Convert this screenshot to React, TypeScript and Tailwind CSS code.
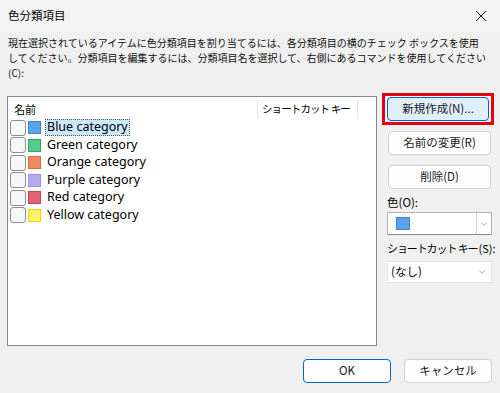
import { ChevronDown } from 'lucide-react';

const jp = { fontFamily: '"Noto Sans CJK JP", "Noto Sans", sans-serif' };
const latin = { fontFamily: '"Noto Sans", "Noto Sans CJK JP", sans-serif' };

const categories = [
    { name: 'Blue category', fill: 'bg-[#5aa3e6]', edge: 'border-[#3a86d0]' },
    { name: 'Green category', fill: 'bg-[#52cc8c]', edge: 'border-[#2fa866]' },
    { name: 'Orange category', fill: 'bg-[#ee8a62]', edge: 'border-[#e06a3e]' },
    { name: 'Purple category', fill: 'bg-[#b3aaee]', edge: 'border-[#9d90e0]' },
    { name: 'Red category', fill: 'bg-[#df6370]', edge: 'border-[#c94453]' },
    { name: 'Yellow category', fill: 'bg-[#fff06a]', edge: 'border-[#f5d800]' },
];

const Button = ({ label, className = '' }: { label: string; className?: string }) => (
    <div
        className={`flex items-center justify-center rounded-[4px] border text-[11.5px] text-[#1a1a1a] ${className}`}
        style={jp}
    >
        {label}
    </div>
);

const App = () => {
    return (
        <div className="flex h-[393px] w-[500px] flex-col overflow-hidden bg-[#f0f0f0] text-black" style={jp}>
            {/* Title bar */}
            <div className="flex h-[32px] shrink-0 items-center justify-between bg-[#f3f3f3] pl-[8px] pr-[12px]">
                <span className="text-[11.5px]">色分類項目</span>
                <svg width="12" height="12" viewBox="0 0 12 12" className="mr-[1px]">
                    <path d="M1 1 L11 11 M11 1 L1 11" stroke="#1a1a1a" strokeWidth="1" />
                </svg>
            </div>

            {/* Description */}
            <div className="whitespace-nowrap pl-[8px] pt-[3px] text-[10px] leading-[15px] text-[#111]">
                <div>現在選択されているアイテムに色分類項目を割り当てるには、各分類項目の横のチェック ボックスを使用</div>
                <div>してください。分類項目を編集するには、分類項目名を選択して、右側にあるコマンドを使用してください</div>
                <div>(C):</div>
            </div>

            <div className="mt-[16px] flex">
                {/* List box */}
                <div className="ml-[7px] flex h-[250px] w-[370px] flex-col border border-[#828790] bg-white">
                    <div className="flex h-[22px] shrink-0 items-center whitespace-nowrap pt-[2px] text-[11px]">
                        <div className="w-[249px] pl-[6px]">名前</div>
                        <div className="h-[18px] w-px bg-[#e5e5e5]" />
                        <div className="w-[99px] pl-[4px] text-[10.5px] tracking-[-0.9px]">ショートカット キー</div>
                        <div className="h-[18px] w-px bg-[#e5e5e5]" />
                    </div>
                    {categories.map((c, i) => (
                        <div key={c.name} className="flex h-[17.5px] items-center">
                            <div className="ml-[2px] h-[16px] w-[16px] rounded-[3px] border border-[#8d8d8d] bg-[#f7f7f7]" />
                            <div className={`ml-[2px] h-[13px] w-[13px] border ${c.fill} ${c.edge}`} />
                            <div
                                className={`ml-[4px] flex h-[17px] items-center px-[1px] text-[12.5px] ${
                                    i === 0 ? 'border border-dotted border-[#555] bg-[#cce8ff]' : 'border border-transparent'
                                }`}
                                style={latin}
                            >
                                {c.name}
                            </div>
                        </div>
                    ))}
                </div>

                {/* Right column */}
                <div className="-mt-[3px] ml-[5px] flex w-[112px] flex-col">
                    <div className="border-[3px] border-[#e50012] px-[2px] py-[1px]">
                        <Button label="新規作成(N)..." className="h-[24px] border-[#0067c0] bg-[#e0eef9]" />
                    </div>
                    <Button label="名前の変更(R)" className="ml-[6px] mt-[6px] h-[24px] w-[103px] border-[#d0d0d0] bg-[#fdfdfd]" />
                    <Button label="削除(D)" className="ml-[6px] mt-[10px] h-[24px] w-[103px] border-[#d0d0d0] bg-[#fdfdfd]" />

                    <div className="ml-[5px] mt-[6px] text-[11.5px] leading-[15px]">色(O):</div>
                    <div className="ml-[5px] mt-[2px] flex h-[23px] w-[105px] items-center border border-[#b4b4b4] border-b-[#8a8a8a] bg-white">
                        <div className="ml-[8px] h-[13px] w-[14px] border border-[#3a86d0] bg-[#5aa3e6]" />
                        <div className="ml-auto flex h-full w-[15px] items-center justify-center border-l border-[#d0d0d0]">
                            <ChevronDown size={10} strokeWidth={1.2} color="#555" />
                        </div>
                    </div>

                    <div className="ml-[5px] mt-[6px] whitespace-nowrap text-[11px] leading-[15px]">
                        <span className="tracking-[-1.1px]">ショートカット キー</span>
                        <span className="ml-[1px]">(S):</span>
                    </div>
                    <div className="ml-[5px] mt-[5px] flex h-[22px] w-[105px] items-center justify-between border border-[#e3e3e3] bg-white pl-[3px] pr-[4px] text-[11.5px]">
                        <span>(なし)</span>
                        <ChevronDown size={10} strokeWidth={1.2} color="#555" />
                    </div>
                </div>
            </div>

            {/* Bottom buttons */}
            <div className="mt-[13px] flex justify-end gap-[13px] pr-[8px]">
                <Button label="OK" className="h-[24px] w-[88px] border-[#0067c0] bg-[#fdfdfd]" />
                <Button label="キャンセル" className="h-[24px] w-[88px] border-[#d0d0d0] bg-[#fdfdfd]" />
            </div>
        </div>
    );
};

export default App;
